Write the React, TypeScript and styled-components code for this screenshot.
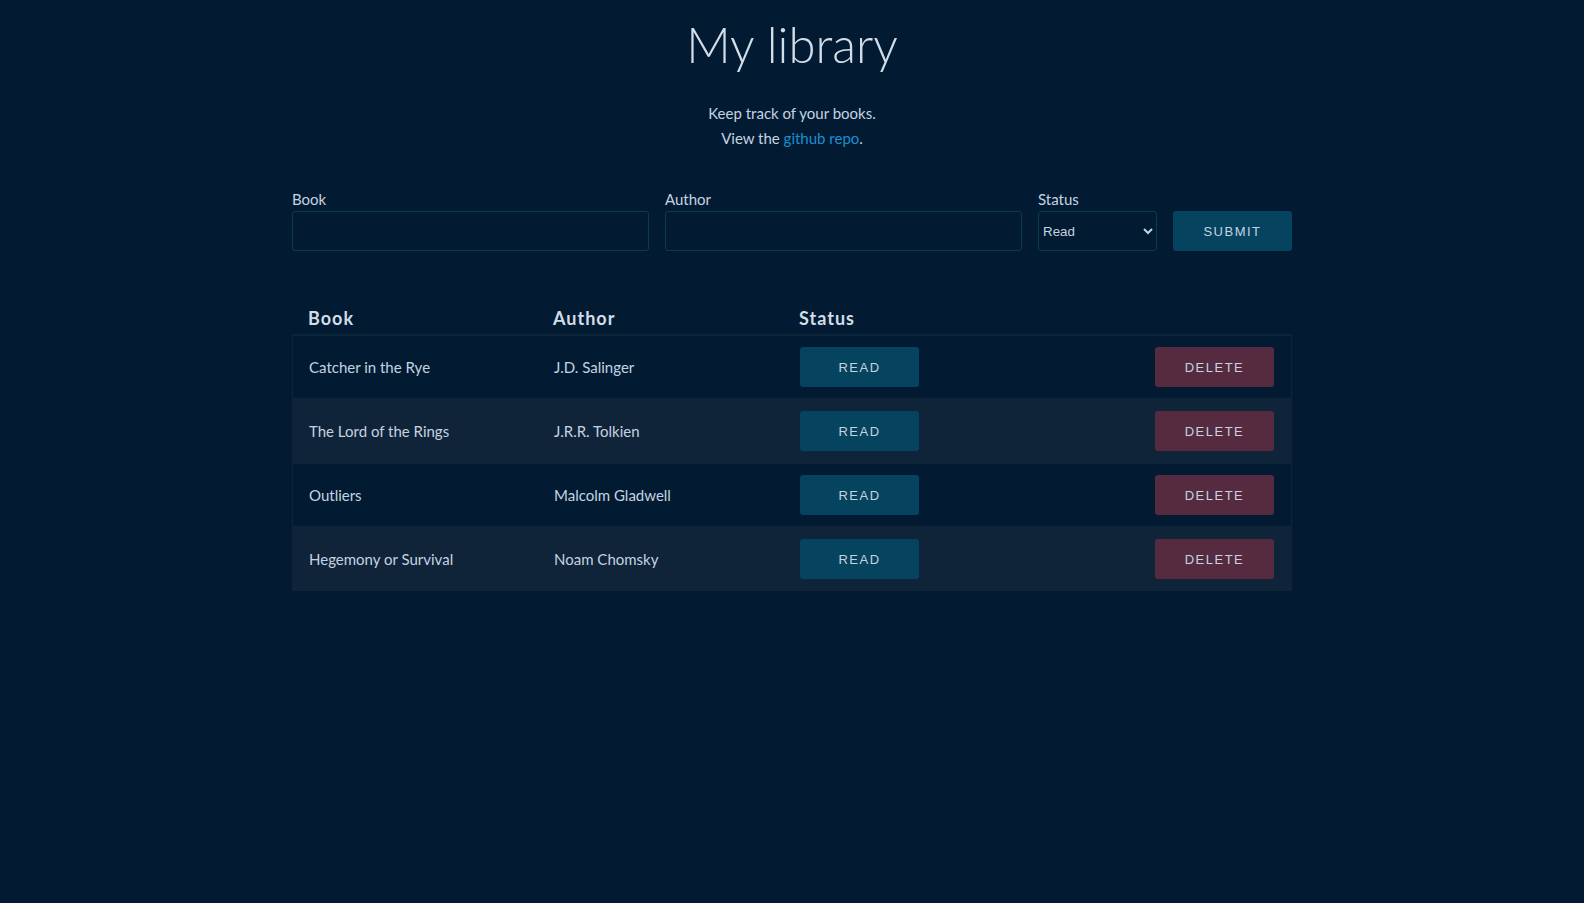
import React, { useState } from "react";
import styled, { createGlobalStyle } from "styled-components";

interface IBook {
  title: string;
  author: string;
  read: boolean;
}

const GlobalStyle = createGlobalStyle`
  * {
    box-sizing: border-box;
  }
  html, body {
    margin: 0;
    padding: 0;
    background-color: #021b32;
    color: #c5d3e1;
    font-family: "Lato", "Open Sans", sans-serif;
  }
`;

const Page = styled.main`
  width: 1000px;
  margin: 0 auto;
  padding-top: 14px;
`;

const Title = styled.h1`
  margin: 0;
  text-align: center;
  font-size: 49px;
  font-weight: 300;
  line-height: 60px;
  color: #d2dde8;
`;

const Intro = styled.p`
  margin: 27px 0 0;
  text-align: center;
  font-size: 15px;
  line-height: 25px;
`;

const Link = styled.a`
  color: #1c8fd0;
  text-decoration: none;
`;

const Form = styled.form`
  display: grid;
  grid-template-columns: 1fr 1fr 119px 119px;
  column-gap: 16px;
  align-items: end;
  margin-top: 39px;
`;

const Field = styled.label`
  display: flex;
  flex-direction: column;
  gap: 3px;
  font-size: 15px;
  line-height: 18px;
`;

const TextInput = styled.input`
  height: 40px;
  background: transparent;
  border: 1px solid #0a3b55;
  border-radius: 3px;
  color: #c5d3e1;
  padding: 0 10px;
  font-size: 15px;
  outline: none;
`;

const Select = styled.select`
  height: 40px;
  background: #021b32;
  border: 1px solid #0a3b55;
  border-radius: 3px;
  color: #c5d3e1;
  padding: 0;
  font-family: "Liberation Sans", Arial, sans-serif;
  font-size: 13.33px;
  outline: none;
`;

const Button = styled.button<{ $tone?: "blue" | "red" }>`
  width: 119px;
  height: 40px;
  border: none;
  border-radius: 3px;
  background-color: ${(p) => (p.$tone === "red" ? "#572b3f" : "#06435e")};
  color: #c5d3e1;
  font-family: "Liberation Sans", Arial, sans-serif;
  font-size: 13px;
  letter-spacing: 1.5px;
  text-transform: uppercase;
  cursor: pointer;
`;

const Table = styled.div`
  margin-top: 56px;
`;

const Row = styled.div<{ $striped?: boolean }>`
  display: grid;
  grid-template-columns: 245px 246px 1fr 120px;
  align-items: center;
  padding: 0 16px;
  height: 64px;
  background-color: ${(p) => (p.$striped ? "#0f2339" : "transparent")};
  border: 1px solid ${(p) => (p.$striped ? "transparent" : "#0d2539")};
`;

const HeadRow = styled.div`
  display: grid;
  grid-template-columns: 245px 246px 1fr 120px;
  padding: 0 16px;
  height: 28px;
  border-bottom: 1px solid #0d2539;
`;

const HeadCell = styled.div`
  font-size: 18px;
  font-weight: 700;
  letter-spacing: 1px;
  color: #d2dde8;
`;

const Cell = styled.div`
  font-size: 15px;
`;

const initialBooks: IBook[] = [
  { title: "Catcher in the Rye", author: "J.D. Salinger", read: true },
  { title: "The Lord of the Rings", author: "J.R.R. Tolkien", read: true },
  { title: "Outliers", author: "Malcolm Gladwell", read: true },
  { title: "Hegemony or Survival", author: "Noam Chomsky", read: true },
];

const App = () => {
  const [books, setBooks] = useState<IBook[]>(initialBooks);

  const onSubmit = (e: React.FormEvent) => {
    e.preventDefault();
  };

  return (
    <>
      <GlobalStyle />
      <Page>
        <Title>My library</Title>
        <Intro>
          Keep track of your books.
          <br />
          View the <Link href="#">github repo</Link>.
        </Intro>
        <Form onSubmit={onSubmit}>
          <Field>
            Book
            <TextInput type="text" />
          </Field>
          <Field>
            Author
            <TextInput type="text" />
          </Field>
          <Field>
            Status
            <Select defaultValue="read">
              <option value="read">Read</option>
              <option value="unread">Not read</option>
            </Select>
          </Field>
          <Button type="submit">Submit</Button>
        </Form>
        <Table>
          <HeadRow>
            <HeadCell>Book</HeadCell>
            <HeadCell>Author</HeadCell>
            <HeadCell>Status</HeadCell>
            <div />
          </HeadRow>
          {books.map((book, i) => (
            <Row key={book.title} $striped={i % 2 === 1}>
              <Cell>{book.title}</Cell>
              <Cell>{book.author}</Cell>
              <div>
                <Button
                  onClick={() =>
                    setBooks((prev) =>
                      prev.map((b, j) => (j === i ? { ...b, read: !b.read } : b))
                    )
                  }
                >
                  {book.read ? "Read" : "Unread"}
                </Button>
              </div>
              <Button
                $tone="red"
                onClick={() => setBooks((prev) => prev.filter((_, j) => j !== i))}
              >
                Delete
              </Button>
            </Row>
          ))}
        </Table>
      </Page>
    </>
  );
};

export default App;
